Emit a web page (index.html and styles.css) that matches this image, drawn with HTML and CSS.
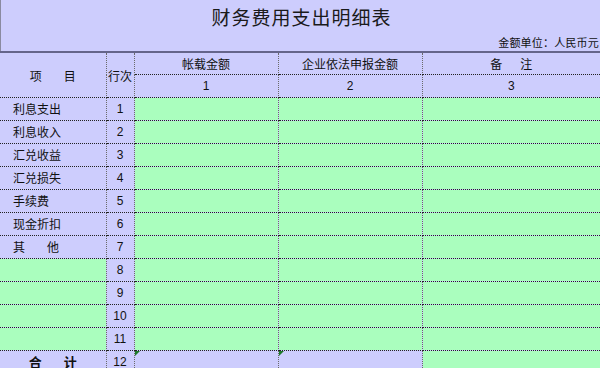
FILE: index.html
```html
<!DOCTYPE html>
<html lang="zh">
<head>
<meta charset="utf-8">
<link rel="stylesheet" href="styles.css">
</head>
<body>
<div class="sheet">
  <div class="head">
    <div class="title">财务费用支出明细表</div>
    <div class="unit">金额单位：人民币元</div>
  </div>
  <table class="grid">
    <colgroup>
      <col class="c-a"><col class="c-b"><col class="c-c"><col class="c-d"><col class="c-e">
    </colgroup>
    <tr class="h1">
      <td rowspan="2" class="lav ctr">项<span class="gap"></span>目</td>
      <td rowspan="2" class="lav ctr">行次</td>
      <td class="lav ctr">帐载金额</td>
      <td class="lav ctr">企业依法申报金额</td>
      <td class="lav ctr">备<span class="gap2"></span>注</td>
    </tr>
    <tr class="h2">
      <td class="lav ctr num">1</td>
      <td class="lav ctr num">2</td>
      <td class="lav ctr num">3</td>
    </tr>
    <tr><td class="lav lbl">利息支出</td><td class="lav ctr num">1</td><td class="grn"></td><td class="grn"></td><td class="grn"></td></tr>
    <tr><td class="lav lbl">利息收入</td><td class="lav ctr num">2</td><td class="grn"></td><td class="grn"></td><td class="grn"></td></tr>
    <tr><td class="lav lbl">汇兑收益</td><td class="lav ctr num">3</td><td class="grn"></td><td class="grn"></td><td class="grn"></td></tr>
    <tr><td class="lav lbl">汇兑损失</td><td class="lav ctr num">4</td><td class="grn"></td><td class="grn"></td><td class="grn"></td></tr>
    <tr><td class="lav lbl">手续费</td><td class="lav ctr num">5</td><td class="grn"></td><td class="grn"></td><td class="grn"></td></tr>
    <tr><td class="lav lbl">现金折扣</td><td class="lav ctr num">6</td><td class="grn"></td><td class="grn"></td><td class="grn"></td></tr>
    <tr><td class="lav lbl">其<span class="gap"></span>他</td><td class="lav ctr num">7</td><td class="grn"></td><td class="grn"></td><td class="grn"></td></tr>
    <tr><td class="grn"></td><td class="lav ctr num">8</td><td class="grn"></td><td class="grn"></td><td class="grn"></td></tr>
    <tr><td class="grn"></td><td class="lav ctr num">9</td><td class="grn"></td><td class="grn"></td><td class="grn"></td></tr>
    <tr><td class="grn"></td><td class="lav ctr num">10</td><td class="grn"></td><td class="grn"></td><td class="grn"></td></tr>
    <tr><td class="grn"></td><td class="lav ctr num">11</td><td class="grn"></td><td class="grn"></td><td class="grn"></td></tr>
    <tr class="total"><td class="lav ctr bold">合<span class="gap"></span>计</td><td class="lav ctr num">12</td><td class="lav flag"></td><td class="lav flag"></td><td class="grn"></td></tr>
  </table>
</div>
</body>
</html>
```
FILE: styles.css
```css
html, body {
  margin: 0;
  padding: 0;
  background: #cdcdfd;
  overflow: hidden;
}
body {
  font-family: "Noto Sans CJK SC", "Liberation Sans", sans-serif;
  font-size: 12px;
  color: #111;
}
.sheet {
  width: 600px;
  height: 368px;
  border-left: 1px solid #8a8aa0;
  box-sizing: border-box;
  background: #cdcdfd;
}
.head {
  height: 51px;
  display: flex;
  flex-direction: column;
}
.title {
  height: 34px;
  line-height: 34px;
  text-align: center;
  font-size: 19px;
  letter-spacing: 1px;
  padding-left: 2px;
  color: #1a1a1a;
}
.unit {
  text-align: right;
  font-size: 11px;
  line-height: 17px;
  padding-right: 1px;
  letter-spacing: 0.2px;
}
.grid {
  border-collapse: collapse;
  table-layout: fixed;
  width: 600px;
  margin-left: -1px;
  border-top: 2px solid #65658a;
}
.c-a { width: 106px; }
.c-b { width: 28px; }
.c-c { width: 144px; }
.c-d { width: 144px; }
.c-e { width: 178px; }
.grid td {
  border-left: 1px dotted #6a6a6a;
  border-right: 1px dotted #6a6a6a;
  border-bottom: 1px dotted #222;
  padding: 0;
  height: 22px;
  white-space: nowrap;
  overflow: hidden;
  line-height: 22px;
}
.grid tr td:first-child { border-left: none; }
.grid tr td:last-child { border-right: none; }
.grid .h1 td { height: 21px; line-height: 21px; }
.grid .h2 td { height: 22px; }
.lav { background: #cdcdfd; }
.grn { background: #aafebe; }
.ctr { text-align: center; }
.lbl { padding-left: 13px !important; }
.num { font-family: "Liberation Sans", "Noto Sans CJK SC", sans-serif; font-size: 12px; }
.gap { display: inline-block; width: 22px; }
.gap2 { display: inline-block; width: 18px; }
.bold { font-weight: bold; font-size: 13px; }
.total td { height: 22px; }
.flag { position: relative; }
.flag::before {
  content: "";
  position: absolute;
  left: 0;
  top: 0;
  border-top: 5px solid #1e7a2a;
  border-right: 5px solid transparent;
}
```
